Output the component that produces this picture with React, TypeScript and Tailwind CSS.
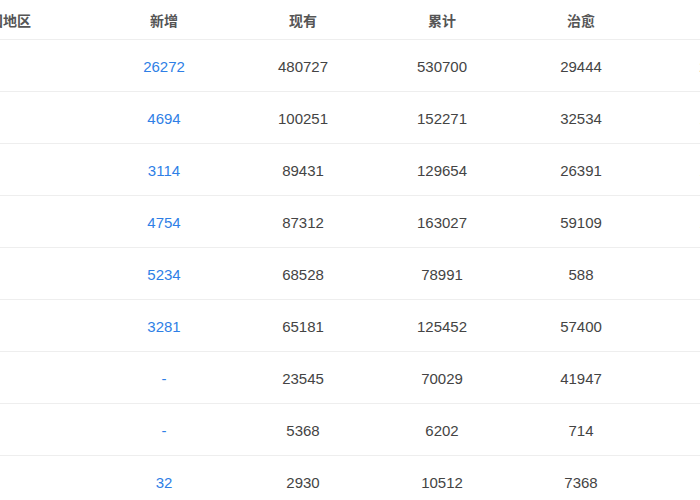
const rows = [
  ["26272", "480727", "530700", "29444", "20459"],
  ["4694", "100251", "152271", "32534", "19486"],
  ["3114", "89431", "129654", "26391", "13846"],
  ["4754", "87312", "163027", "59109", "16606"],
  ["5234", "68528", "78991", "588", "9875"],
  ["3281", "65181", "125452", "57400", "2871"],
  ["-", "23545", "70029", "41947", "4537"],
  ["-", "5368", "6202", "714", "120"],
  ["32", "2930", "10512", "7368", "214"],
];

export default function App() {
  return (
    <div
      className="w-[700px] h-[500px] overflow-hidden bg-white"
      style={{ fontFamily: '"Liberation Sans", "Noto Sans CJK SC", sans-serif' }}
    >
      <div className="ml-[-40px] w-[900px]">
        <div className="flex h-[40px] items-center border-b border-[#eeeeee] pt-[3px] text-[14px] font-bold text-[#555]">
          <div className="w-[134.5px] shrink-0 pl-[29px]">国地区</div>
          <div className="w-[139px] shrink-0 text-center">新增</div>
          <div className="w-[139px] shrink-0 text-center">现有</div>
          <div className="w-[139px] shrink-0 text-center">累计</div>
          <div className="w-[139px] shrink-0 text-center">治愈</div>
          <div className="w-[139px] shrink-0" />
        </div>
        {rows.map((r, i) => (
          <div
            key={i}
            className="flex h-[52px] items-center border-b border-[#eeeeee] pt-[3px] text-[15px] text-[#444]"
          >
            <div className="w-[134.5px] shrink-0" />
            <div className="w-[139px] shrink-0 text-center text-[#2f7fe6]">{r[0]}</div>
            <div className="w-[139px] shrink-0 text-center">{r[1]}</div>
            <div className="w-[139px] shrink-0 text-center">{r[2]}</div>
            <div className="w-[139px] shrink-0 text-center">{r[3]}</div>
            <div className="w-[139px] shrink-0 text-center">{r[4]}</div>
          </div>
        ))}
      </div>
    </div>
  );
}
